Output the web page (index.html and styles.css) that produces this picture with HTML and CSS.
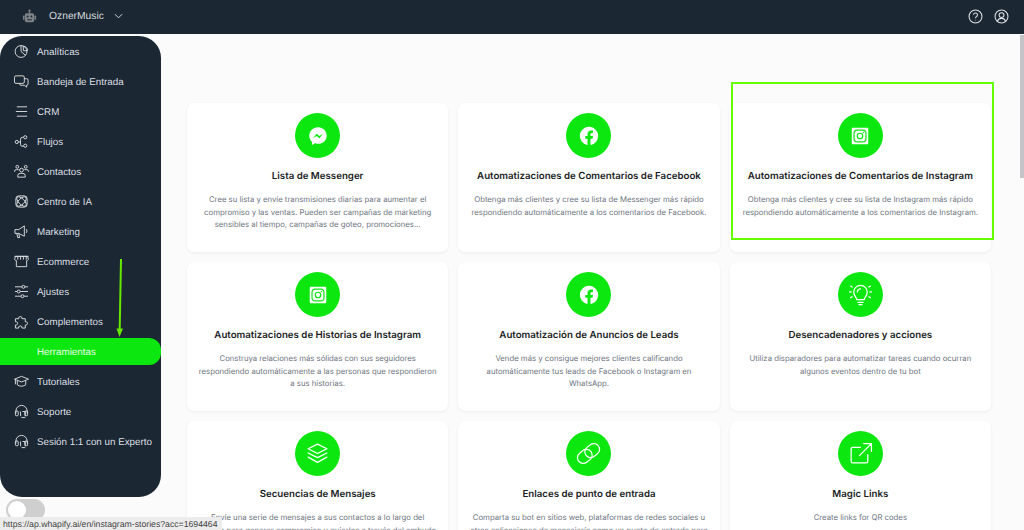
FILE: index.html
```html
<!DOCTYPE html>
<html lang="es">
<head>
<meta charset="utf-8">
<title>OznerMusic</title>
<link rel="stylesheet" href="styles.css">
</head>
<body>
<header class="topbar">
  <div class="brand">
    <svg class="bot" viewBox="0 0 16 16"><circle cx="8" cy="1.800" r="1.200"/><rect x="7.400" y="2" width="1.200" height="3"/><rect x="3" y="4.400" width="10" height="9.600" rx="2"/><rect x="1" y="7" width="1.600" height="4.500" rx=".7"/><rect x="13.400" y="7" width="1.600" height="4.500" rx=".7"/><circle class="bot-eye" cx="6" cy="8" r="1"/><circle class="bot-eye" cx="10" cy="8" r="1"/><rect class="bot-eye" x="5.500" y="11" width="5" height="1"/></svg>
    <span class="brand-name">OznerMusic</span>
    <svg class="chev" viewBox="0 0 10 6"><path d="M1 1l4 4 4-4"/></svg>
  </div>
  <div class="top-actions">
    <svg class="top-icon" viewBox="0 0 16 16"><circle cx="8" cy="8" r="6.900"/><path d="M5.900 6.200a2.100 2.100 0 1 1 3.300 1.800c-.8.500-1.200.9-1.200 1.800"/><path class="dot" d="M8 11.600v.5"/></svg>
    <svg class="top-icon" viewBox="0 0 16 16"><circle cx="8" cy="8" r="6.900"/><circle cx="8" cy="6.500" r="2.600"/><path d="M3.600 13c.8-2 2.400-3 4.400-3s3.600 1 4.400 3"/></svg>
  </div>
</header>

<div class="layout">
  <div class="side-col">
    <nav class="sidebar">
      <a class="nav-item"><svg class="nav-icon" viewBox="0 0 16 16"><circle cx="7.500" cy="8" r="6.300"/><path d="M7.500 1.700V8l4.800 4"/><path d="M9.800 2.500a4 4 0 0 1 4.500 4.700H10z"/></svg><span>Analíticas</span></a>
      <a class="nav-item"><svg class="nav-icon" viewBox="0 0 16 16"><rect x="0.500" y="2" width="10.500" height="8" rx="1.500"/><path d="M11 5h2.500A1.500 1.500 0 0 1 15 6.500v4a1.500 1.500 0 0 1-1.500 1.500V14l-2.500-2H7.500a1.500 1.500 0 0 1-1.500-1.500V10"/></svg><span>Bandeja de Entrada</span></a>
      <a class="nav-item"><svg class="nav-icon" viewBox="0 0 16 16"><path d="M3 3h11M2 8h12M3 13h11"/></svg><span>CRM</span></a>
      <a class="nav-item"><svg class="nav-icon" viewBox="0 0 16 16"><circle cx="3" cy="8.500" r="1.700"/><circle cx="12" cy="3.500" r="1.700"/><circle cx="12" cy="12.500" r="1.700"/><path d="M4.700 8.500H7M10.300 3.500H9A2 2 0 0 0 7 5.500v6A1.500 1.500 0 0 0 8.500 13h1.800"/></svg><span>Flujos</span></a>
      <a class="nav-item"><svg class="nav-icon" viewBox="0 0 16 16"><circle cx="8" cy="6.500" r="2"/><circle cx="3.500" cy="3" r="1.500"/><circle cx="12.500" cy="3" r="1.500"/><path d="M4 14v-1.500A2.500 2.500 0 0 1 6.500 10h3a2.500 2.500 0 0 1 2.500 2.500V14zM.5 8.500V8A2 2 0 0 1 2.500 6H5M15.500 8.500V8a2 2 0 0 0-2-2H11"/></svg><span>Contactos</span></a>
      <a class="nav-item"><svg class="nav-icon" viewBox="0 0 16 16"><rect x="2" y="2" width="12" height="12" rx="3"/><ellipse cx="8" cy="8" rx="6.500" ry="3" transform="rotate(45 8 8)"/><ellipse cx="8" cy="8" rx="6.500" ry="3" transform="rotate(-45 8 8)"/></svg><span>Centro de IA</span></a>
      <a class="nav-item"><svg class="nav-icon" viewBox="0 0 16 16"><path d="M1 6h4l6-4v11L5 10H1zM3 10l1 4.500h2L5 10M13 5.500a3 3 0 0 1 0 4"/></svg><span>Marketing</span></a>
      <a class="nav-item"><svg class="nav-icon" viewBox="0 0 16 16"><path d="M.5 2.500h15M1.500 2.500h13l.8 3c0 1-1 1.500-1.800 1.500v6.500h-11V7C1.700 7 .7 6.500.7 5.500zM4 3v3M7 3v3M10 3v3M13 3v3"/></svg><span>Ecommerce</span></a>
      <a class="nav-item"><svg class="nav-icon" viewBox="0 0 16 16"><path d="M1 3h14M1 8h14M1 13h14"/><circle class="knob" cx="10" cy="3" r="1.600"/><circle class="knob" cx="5" cy="8" r="1.600"/><circle class="knob" cx="9" cy="13" r="1.600"/></svg><span>Ajustes</span></a>
      <a class="nav-item"><svg class="nav-icon" viewBox="0 0 16 16"><path d="M1.500 5H5a1.800 1.800 0 1 1 3.500 0H12v3.300a1.800 1.800 0 1 1 0 3.400V15H8.500a1.800 1.800 0 1 0-3.500 0H1.500v-3.300a1.800 1.800 0 1 0 0-3.400z"/></svg><span>Complementos</span></a>
      <a class="nav-item is-active"><span>Herramientas</span></a>
      <a class="nav-item"><svg class="nav-icon" viewBox="0 0 16 16"><path d="M.5 5.500L8 2.500l7.500 3L8 8.500zM3.500 7v4.500c2.500 2 6.500 2 9 0V7M1.500 6v5"/></svg><span>Tutoriales</span></a>
      <a class="nav-item"><svg class="nav-icon" viewBox="0 0 16 16"><path d="M2 10V7.500a6 6 0 0 1 12 0V10"/><rect x="1.500" y="7.500" width="3" height="5" rx="1"/><rect x="11.500" y="7.500" width="3" height="5" rx="1"/><path d="M7 8v5M9 8h3v5M8 14.500h4"/></svg><span>Soporte</span></a>
      <a class="nav-item"><svg class="nav-icon" viewBox="0 0 16 16"><path d="M2 10V7.500a6 6 0 0 1 12 0V10"/><rect x="1.500" y="7.500" width="3" height="5" rx="1"/><rect x="11.500" y="7.500" width="3" height="5" rx="1"/><path d="M7 8v5M9 8h3v5M8 14.500h4"/></svg><span>Sesión 1:1 con un Experto</span></a>
    </nav>
    <div class="toggle"><span class="toggle-knob"></span></div>
  </div>

  <main class="content">
    <div class="grid">
      <article class="card">
        <div class="badge"><svg class="badge-icon" viewBox="0 0 24 24"><path class="solid" d="M12 2.500C6.500 2.500 2.500 6.500 2.500 11.700c0 2.800 1.100 5.100 3 6.700v3.300l3.100-1.700c1 .3 2.200.5 3.400.5 5.500 0 9.500-4 9.500-8.800S17.500 2.500 12 2.500z"/><path class="cut" d="M6.500 14.500l4-5 3 2.500 4-2.500-4 5-3-2.500z"/></svg></div>
        <h3>Lista de Messenger</h3>
        <p>Cree su lista y envíe transmisiones diarias para aumentar el compromiso y las ventas. Pueden ser campañas de marketing sensibles al tiempo, campañas de goteo, promociones...</p>
      </article>
      <article class="card">
        <div class="badge"><svg class="badge-icon" viewBox="0 0 24 24"><path class="solid" d="M22 12a10 10 0 1 0-11.600 9.900v-7H7.900V12h2.500V9.800c0-2.500 1.500-3.900 3.800-3.900 1.100 0 2.200.2 2.200.2v2.500h-1.200c-1.200 0-1.600.8-1.600 1.600V12h2.800l-.5 2.900h-2.300v7A10 10 0 0 0 22 12z"/></svg></div>
        <h3>Automatizaciones de Comentarios de Facebook</h3>
        <p>Obtenga más clientes y cree su lista de Messenger más rápido respondiendo automáticamente a los comentarios de Facebook.</p>
      </article>
      <article class="card">
        <div class="badge"><svg class="badge-icon" viewBox="0 0 24 24"><rect class="solid" x="3" y="3" width="18" height="18" rx="1"/><rect class="cut-line" x="5.500" y="5.500" width="13" height="13" rx="3.500"/><circle class="cut-line" cx="12" cy="12" r="3"/><circle class="cut" cx="15.800" cy="8.200" r=".8"/></svg></div>
        <h3>Automatizaciones de Comentarios de Instagram</h3>
        <p>Obtenga más clientes y cree su lista de Instagram más rápido respondiendo automáticamente a los comentarios de Instagram.</p>
      </article>
      <article class="card">
        <div class="badge"><svg class="badge-icon" viewBox="0 0 24 24"><rect class="solid" x="3" y="3" width="18" height="18" rx="1"/><rect class="cut-line" x="5.500" y="5.500" width="13" height="13" rx="3.500"/><circle class="cut-line" cx="12" cy="12" r="3"/><circle class="cut" cx="15.800" cy="8.200" r=".8"/></svg></div>
        <h3>Automatizaciones de Historias de Instagram</h3>
        <p>Construya relaciones más sólidas con sus seguidores respondiendo automáticamente a las personas que respondieron a sus historias.</p>
      </article>
      <article class="card">
        <div class="badge"><svg class="badge-icon" viewBox="0 0 24 24"><path class="solid" d="M22 12a10 10 0 1 0-11.600 9.900v-7H7.900V12h2.500V9.800c0-2.500 1.500-3.900 3.800-3.900 1.100 0 2.200.2 2.200.2v2.500h-1.200c-1.200 0-1.600.8-1.600 1.600V12h2.800l-.5 2.900h-2.300v7A10 10 0 0 0 22 12z"/></svg></div>
        <h3>Automatización de Anuncios de Leads</h3>
        <p>Vende más y consigue mejores clientes calificando automáticamente tus leads de Facebook o Instagram en WhatsApp.</p>
      </article>
      <article class="card">
        <div class="badge"><svg class="badge-icon line" viewBox="0 0 24 24"><path d="M8.500 17c0-2-3-3.500-3-7.200a6.500 6.500 0 0 1 13 0c0 3.700-3 5.200-3 7.200zM9.500 19.500h5M10.500 21.800h3M9 9.500a3 3 0 0 1 3-3M1.500 9.500h1.500M21 9.500h1.500M2.500 4l1.500.8M21.500 4l-1.500.8M2.500 15l1.500-.8M21.500 15l-1.500-.8"/></svg></div>
        <h3>Desencadenadores y acciones</h3>
        <p>Utiliza disparadores para automatizar tareas cuando ocurran algunos eventos dentro de tu bot</p>
      </article>
      <article class="card">
        <div class="badge"><svg class="badge-icon line" viewBox="0 0 24 24"><path d="M12 3l9 4.500-9 4.500-9-4.500zM3 11.500l9 4.500 9-4.500M3 15.500l9 5 9-5"/></svg></div>
        <h3>Secuencias de Mensajes</h3>
        <p>Envíe una serie de mensajes a sus contactos a lo largo del tiempo para generar compromiso y guiarlos a través del embudo de ventas.</p>
      </article>
      <article class="card">
        <div class="badge"><svg class="badge-icon line" viewBox="0 0 24 24"><g transform="rotate(-38 12 12)"><rect x="0" y="6.500" width="15" height="11" rx="5.500"/><rect x="9" y="6.500" width="15" height="11" rx="5.500"/></g></svg></div>
        <h3>Enlaces de punto de entrada</h3>
        <p>Comparta su bot en sitios web, plataformas de redes sociales u otras aplicaciones de mensajería como un punto de entrada para iniciar conversaciones.</p>
      </article>
      <article class="card">
        <div class="badge"><svg class="badge-icon line" viewBox="0 0 24 24"><path d="M12 6H4.500A1.500 1.500 0 0 0 3 7.500v12A1.500 1.500 0 0 0 4.500 21h13a1.500 1.500 0 0 0 1.500-1.500V13M11 14L22 3M15 2.500h7.500V10"/></svg></div>
        <h3>Magic Links</h3>
        <p>Create links for QR codes</p>
      </article>
    </div>
  </main>
</div>

<div class="scroll-thumb"></div>
<div class="highlight"></div>
<svg class="arrow" viewBox="0 0 10 80"><path class="arrow-line" d="M6 0L4.700 70"/><path class="arrow-head" d="M1.500 69.500h6.500L4.500 78z"/></svg>
<div class="status-url">https://ap.whapify.ai/en/instagram-stories?acc=1694464</div>
</body>
</html>
```
FILE: styles.css
```css
* { box-sizing: border-box; }
html, body { height: 100%; }
body {
  margin: 0;
  overflow: hidden;
  display: flex;
  flex-direction: column;
  background: #fbfbfc;
  font-family: "Liberation Sans", Arial, sans-serif;
  text-rendering: geometricPrecision;
}

/* Top bar */
.topbar {
  flex: none;
  height: 34px;
  background: #1b2733;
  display: flex;
  align-items: center;
  justify-content: space-between;
  padding: 0 15px 2px 22px;
}
.brand { display: flex; align-items: center; }
.bot { width: 15px; height: 15px; fill: #7d8287; }
.bot-eye { fill: #1b2733; }
.brand-name { margin-left: 12px; color: #d5d9dc; font-size: 10.300px; }
.chev { width: 9px; height: 6px; margin-left: 10px; fill: none; stroke: #d5d9dc; stroke-width: 1.100; }
.top-actions { display: flex; gap: 11px; }
.top-icon { width: 15px; height: 15px; fill: none; stroke: #e0e3e6; stroke-width: 1.100; }
.top-icon .dot { stroke-width: 1.400; }

/* Layout */
.layout { flex: 1; min-height: 0; display: flex; }
.side-col { flex: none; width: 161px; padding-top: 2px; }
.sidebar {
  height: 461px;
  background: #1b2733;
  border-radius: 22px;
  padding-top: 2px;
  display: flex;
  flex-direction: column;
  gap: 3px;
}
.nav-item {
  height: 27px;
  display: flex;
  align-items: center;
  padding-left: 14px;
  color: #dcdfe2;
  font-size: 9.800px;
}
.nav-item span { margin-left: 8px; padding-top: 2px; white-space: nowrap; }
.nav-icon { flex: none; width: 15px; height: 15px; fill: none; stroke: #dcdfe2; stroke-width: 1; stroke-linejoin: round; }
.nav-icon .knob { fill: #1b2733; }
.is-active {
  background: #0ce80f;
  color: #e9fbe4;
  border-radius: 0 12px 12px 0;
  padding-left: 29px;
}
.toggle {
  width: 39px;
  height: 22px;
  margin: 2px 0 0 6px;
  padding: 2px;
  border-radius: 11px;
  background: #cfcfcf;
}
.toggle-knob { display: block; width: 18px; height: 18px; border-radius: 50%; background: #fff; }

/* Content */
.content { flex: 1; min-width: 0; padding: 69px 33px 0 26px; overflow: hidden; }
.grid {
  display: grid;
  grid-template-columns: repeat(3, minmax(0, 1fr));
  grid-auto-rows: 149px;
  gap: 10px;
}
.card {
  background: #fff;
  border-radius: 7px;
  box-shadow: 0 1px 3px rgba(30, 40, 60, .07);
  padding: 10px 11px 0;
  text-align: center;
}
.badge {
  width: 45px;
  height: 45px;
  margin: 0 auto;
  border-radius: 50%;
  background: #0ce80f;
  display: flex;
  align-items: center;
  justify-content: center;
}
.badge-icon { width: 22px; height: 22px; }
.badge-icon .solid { fill: #fff; }
.badge-icon .cut { fill: #0ce80f; }
.badge-icon .cut-line { fill: none; stroke: #0ce80f; stroke-width: 1.300; }
.badge-icon.line { width: 25px; height: 25px; fill: none; stroke: #fff; stroke-width: 1.200; stroke-linejoin: round; stroke-linecap: round; }
.card h3 {
  margin: 12px 0 0;
  font-family: Inter, "Liberation Sans", sans-serif;
  font-size: 9.700px;
  line-height: 14px;
  font-weight: 600;
  color: #1a1d24;
  white-space: nowrap;
}
.card p {
  margin: 9px 0 0;
  font-family: Inter, "Liberation Sans", sans-serif;
  font-size: 7.750px;
  line-height: 12.500px;
  color: #6f7681;
}

/* Overlays: annotations and browser chrome */
.scroll-thumb {
  position: absolute;
  top: 35px;
  right: 0;
  width: 4px;
  height: 143px;
  background: #c4c4c6;
}
.highlight {
  position: absolute;
  left: 731px;
  top: 82px;
  width: 263px;
  height: 158px;
  border: 2px solid #66ff00;
}
.arrow { position: absolute; left: 115px; top: 259px; width: 10px; height: 80px; }
.arrow-line { fill: none; stroke: #66e800; stroke-width: 2; }
.arrow-head { fill: #66e800; }
.status-url {
  position: absolute;
  left: 0;
  bottom: 0;
  height: 13px;
  padding: 0 4px 0 3px;
  background: #ececec;
  color: #444;
  font-size: 8.700px;
  line-height: 14px;
  white-space: nowrap;
}
```
